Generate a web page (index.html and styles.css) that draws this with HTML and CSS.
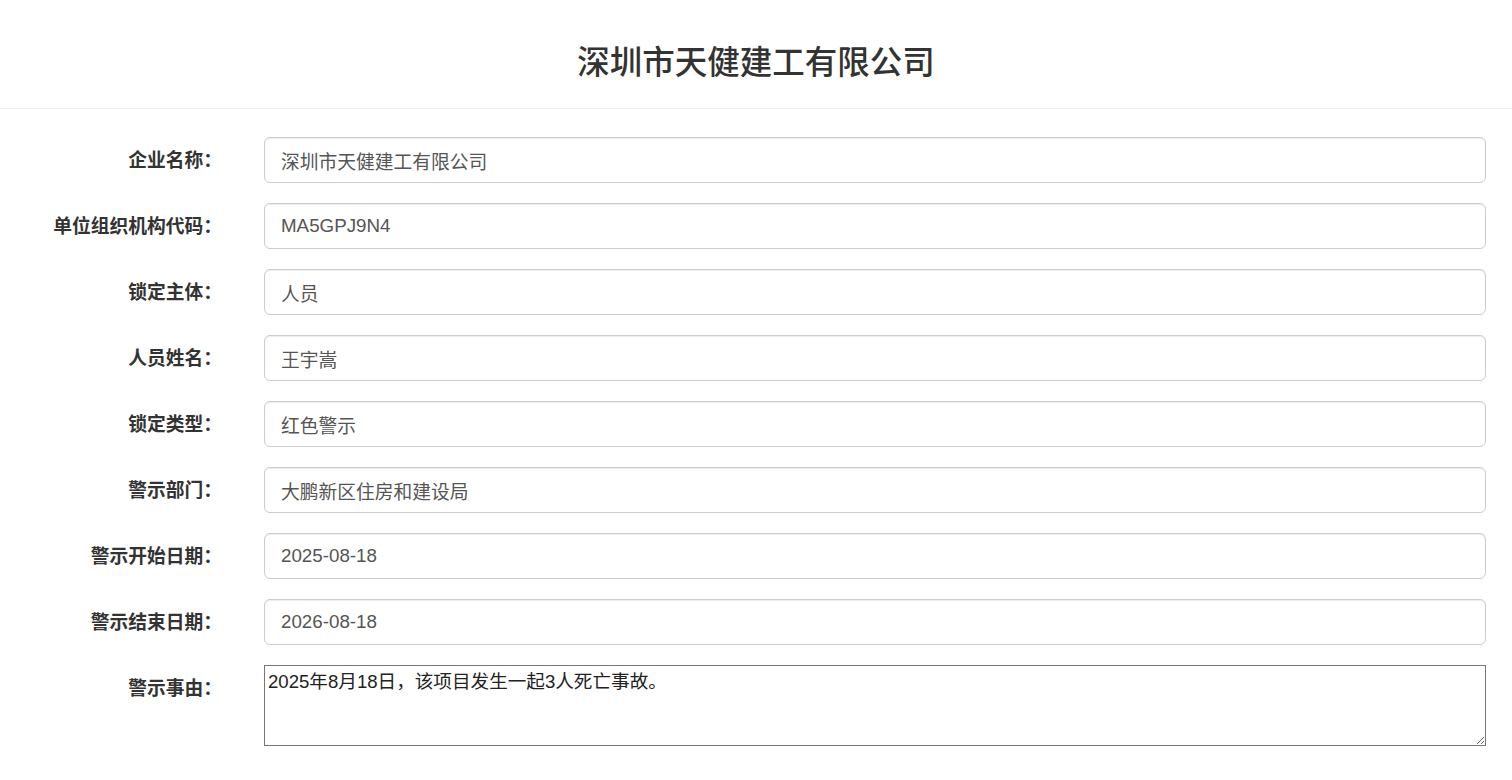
FILE: index.html
```html
<!DOCTYPE html>
<html lang="zh-CN">
<head>
<meta charset="utf-8">
<title>深圳市天健建工有限公司</title>
<link rel="stylesheet" href="styles.css">
</head>
<body>
<header class="page-header">
  <h1 class="page-title">深圳市天健建工有限公司</h1>
</header>
<form class="form">
  <div class="form-row">
    <label class="form-label">企业名称：</label>
    <input class="form-control" type="text" value="深圳市天健建工有限公司" readonly>
  </div>
  <div class="form-row">
    <label class="form-label">单位组织机构代码：</label>
    <input class="form-control" type="text" value="MA5GPJ9N4" readonly>
  </div>
  <div class="form-row">
    <label class="form-label">锁定主体：</label>
    <input class="form-control" type="text" value="人员" readonly>
  </div>
  <div class="form-row">
    <label class="form-label">人员姓名：</label>
    <input class="form-control" type="text" value="王宇嵩" readonly>
  </div>
  <div class="form-row">
    <label class="form-label">锁定类型：</label>
    <input class="form-control" type="text" value="红色警示" readonly>
  </div>
  <div class="form-row">
    <label class="form-label">警示部门：</label>
    <input class="form-control" type="text" value="大鹏新区住房和建设局" readonly>
  </div>
  <div class="form-row">
    <label class="form-label">警示开始日期：</label>
    <input class="form-control" type="text" value="2025-08-18" readonly>
  </div>
  <div class="form-row">
    <label class="form-label">警示结束日期：</label>
    <input class="form-control" type="text" value="2026-08-18" readonly>
  </div>
  <div class="form-row">
    <label class="form-label">警示事由：</label>
    <textarea class="form-textarea" readonly>2025年8月18日，该项目发生一起3人死亡事故。</textarea>
  </div>
</form>
</body>
</html>
```

FILE: styles.css
```css
html, body {
  margin: 0;
  padding: 0;
  background: #fff;
}
body {
  font-family: "Liberation Sans", "Noto Sans CJK SC", sans-serif;
  color: #333;
}
.page-header {
  padding: 46px 0 27px;
  border-bottom: 1px solid #eeeeee;
  text-align: center;
}
.page-title {
  margin: 0;
  font-size: 32.5px;
  line-height: 35px;
  font-weight: 500;
  color: #333;
}
.form {
  padding: 28px 26px 0 0;
}
.form-row {
  display: flex;
  align-items: flex-start;
  margin-bottom: 20px;
}
.form-label {
  flex: 0 0 222px;
  box-sizing: border-box;
  text-align: right;
  padding-top: 11px;
  margin-right: 42px;
  font-size: 18.75px;
  line-height: 26px;
  font-weight: bold;
  color: #333;
}
.form-control {
  flex: 1 1 auto;
  min-width: 0;
  box-sizing: border-box;
  height: 46px;
  padding: 10px 16px;
  font-family: "Liberation Sans", "Noto Sans CJK SC", sans-serif;
  font-size: 18.75px;
  line-height: 1.33;
  color: #555;
  background: #fff;
  border: 1px solid #ccc;
  border-radius: 6px;
  box-shadow: inset 0 1px 1px rgba(0, 0, 0, 0.075);
  outline: none;
}
.form-textarea {
  flex: 1 1 auto;
  min-width: 0;
  box-sizing: border-box;
  height: 81px;
  margin: 0;
  padding: 3px 3px;
  font-family: "Liberation Sans", "Noto Sans CJK SC", sans-serif;
  font-size: 18.6px;
  line-height: 1.42857;
  color: #222;
  background: #fff;
  border: 1px solid #767676;
  border-radius: 0;
  outline: none;
}
```
